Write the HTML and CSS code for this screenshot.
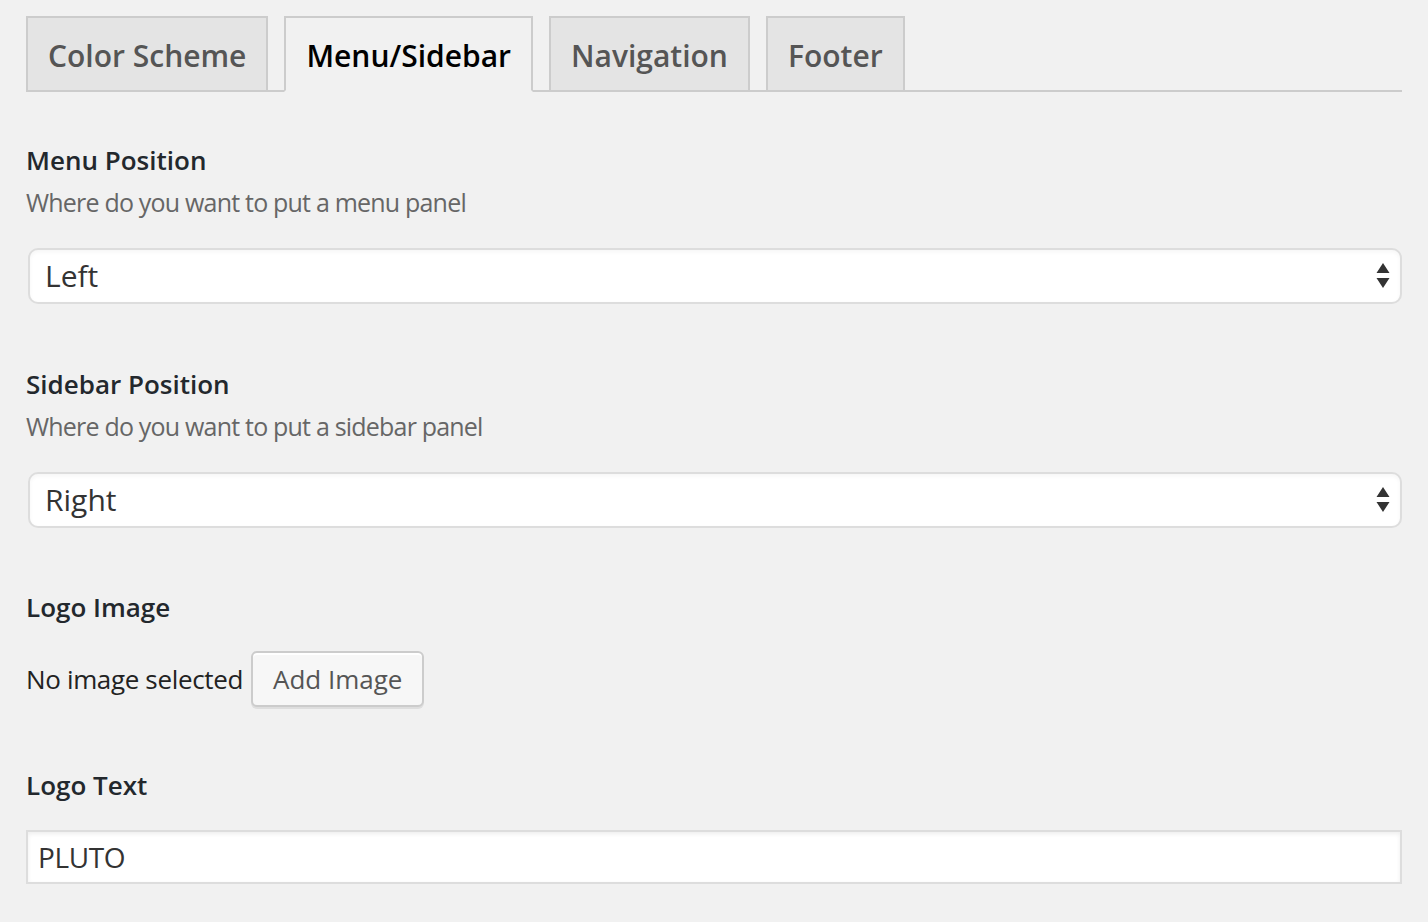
FILE: index.html
```html
<!DOCTYPE html>
<html lang="en">
<head>
<meta charset="utf-8">
<title>Theme Options</title>
<link rel="stylesheet" href="styles.css">
</head>
<body>
<div class="page">
  <nav class="tabs">
    <a class="tab">Color Scheme</a>
    <a class="tab tab-active">Menu/Sidebar</a>
    <a class="tab">Navigation</a>
    <a class="tab">Footer</a>
  </nav>

  <section class="field field-first">
    <h3 class="label">Menu Position</h3>
    <p class="desc">Where do you want to put a menu panel</p>
    <div class="select-wrap">
      <select class="select"><option>Left</option><option>Right</option></select>
      <svg class="select-arrow" width="14" height="26" viewBox="0 0 14 26" aria-hidden="true"><path d="M7 0 L13.5 10 L0.5 10 Z M0.5 15 L13.5 15 L7 25 Z" fill="#333"/></svg>
    </div>
  </section>

  <section class="field">
    <h3 class="label">Sidebar Position</h3>
    <p class="desc">Where do you want to put a sidebar panel</p>
    <div class="select-wrap">
      <select class="select"><option>Right</option><option>Left</option></select>
      <svg class="select-arrow" width="14" height="26" viewBox="0 0 14 26" aria-hidden="true"><path d="M7 0 L13.5 10 L0.5 10 Z M0.5 15 L13.5 15 L7 25 Z" fill="#333"/></svg>
    </div>
  </section>

  <section class="field field-image">
    <h3 class="label">Logo Image</h3>
    <div class="image-row">
      <span class="no-image">No image selected</span>
      <button class="button" type="button">Add Image</button>
    </div>
  </section>

  <section class="field field-last">
    <h3 class="label">Logo Text</h3>
    <input class="text-input" type="text" value="PLUTO">
  </section>
</div>
</body>
</html>
```

FILE: styles.css
```css
* { box-sizing: border-box; }

html, body {
  margin: 0;
  padding: 0;
  background: #f1f1f1;
}

body {
  font-family: "Open Sans", "Noto Sans", sans-serif;
  color: #222;
}

.page {
  padding: 16px 26px 0 26px;
}

.tabs {
  display: flex;
  gap: 16px;
  border-bottom: 2px solid #ccc;
  height: 76px;
}

.tab {
  display: block;
  height: 76px;
  margin-bottom: -2px;
  padding: 3px 20px 0 20px;
  border: 2px solid #ccc;
  background: #e4e4e4;
  color: #555;
  font-size: 30px;
  font-weight: 600;
  line-height: 69px;
  white-space: nowrap;
}

.tab-active {
  background: #f1f1f1;
  border-bottom-color: #f1f1f1;
  color: #000;
}

.field {
  margin-top: 62px;
}

.field-first {
  margin-top: 50px;
}

.field-image {
  margin-top: 61px;
}

.field-last {
  margin-top: 60px;
}

.label {
  margin: 0;
  font-size: 26px;
  font-weight: 600;
  line-height: 36px;
  color: #23282d;
}

.desc {
  margin: 6px 0 0 0;
  font-size: 25px;
  letter-spacing: -0.8px;
  line-height: 36px;
  color: #666;
}

.select-wrap {
  position: relative;
  margin: 28px 0 0 2px;
}

.select {
  display: block;
  width: 100%;
  height: 56px;
  margin: 0;
  padding: 0 40px 0 15px;
  border: 2px solid #ddd;
  border-radius: 10px;
  background: #fff;
  color: #333;
  font-family: "Open Sans", "Noto Sans", sans-serif;
  font-size: 30px;
  line-height: 52px;
  -webkit-appearance: none;
  appearance: none;
  box-shadow: inset 0 2px 4px rgba(0, 0, 0, 0.04);
}

.select-arrow {
  position: absolute;
  right: 12px;
  top: 15px;
}

.image-row {
  display: flex;
  align-items: center;
  gap: 8px;
  margin-top: 26px;
}

.no-image {
  font-size: 26px;
  letter-spacing: -0.35px;
  line-height: 36px;
  color: #222;
}

.button {
  height: 56px;
  padding: 0 20px;
  border: 2px solid #ccc;
  border-radius: 6px;
  background: #f7f7f7;
  color: #555;
  font-family: "Open Sans", "Noto Sans", sans-serif;
  font-size: 26px;
  line-height: 52px;
  box-shadow: inset 0 2px 0 #fff, 0 2px 0 rgba(0, 0, 0, 0.08);
  cursor: pointer;
}

.text-input {
  display: block;
  width: 100%;
  height: 54px;
  margin-top: 27px;
  padding: 0 10px;
  border: 2px solid #ddd;
  border-radius: 0;
  background: #fff;
  color: #333;
  font-family: "Open Sans", "Noto Sans", sans-serif;
  font-size: 28px;
  letter-spacing: -0.4px;
  box-shadow: inset 0 2px 4px rgba(0, 0, 0, 0.07);
}
```
